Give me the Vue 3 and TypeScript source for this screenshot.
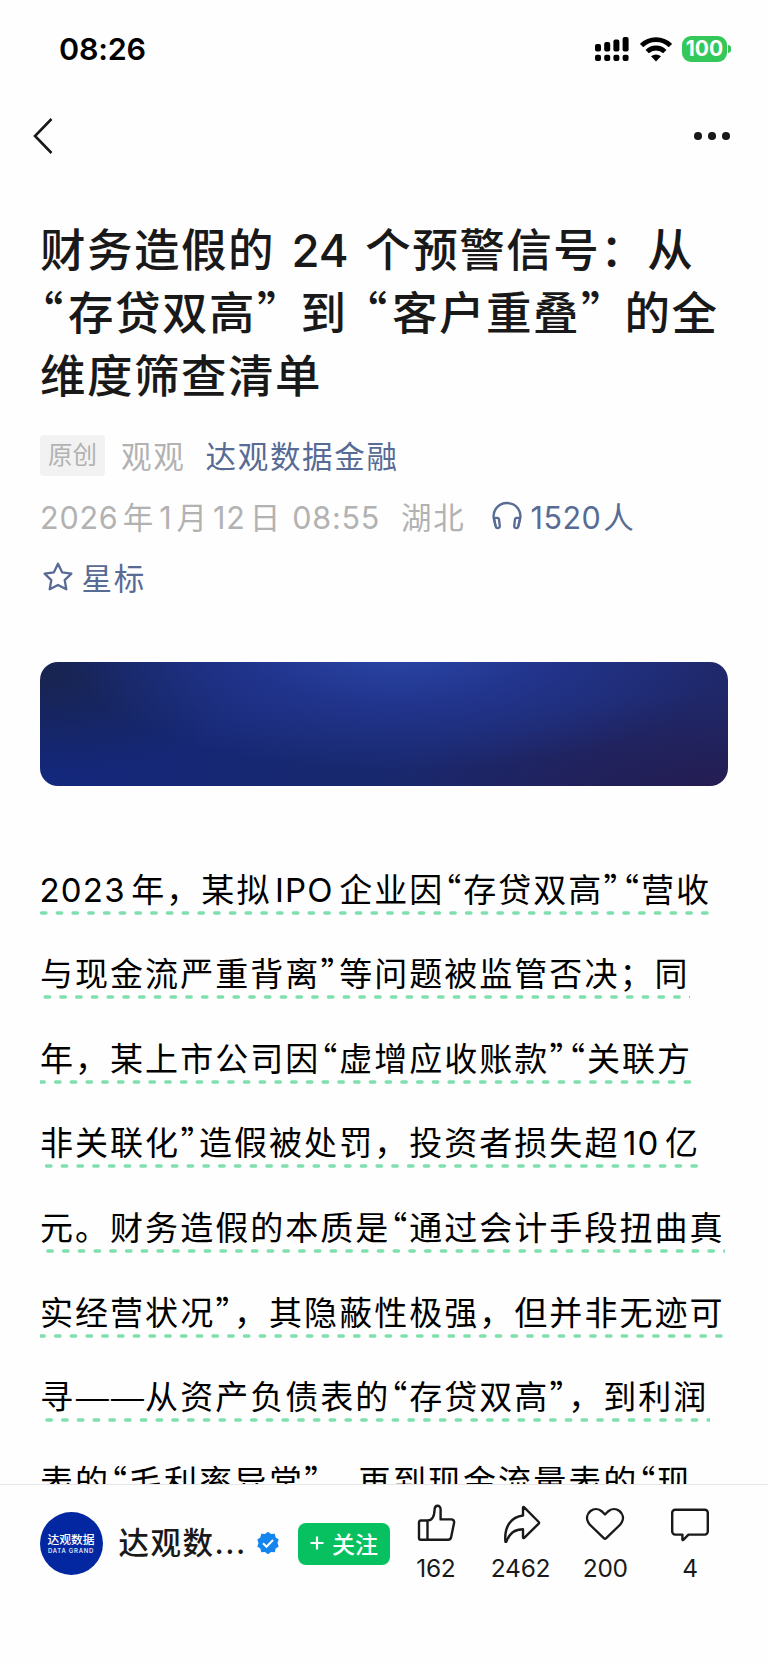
<script setup lang="ts">
type RunKind = 'han' | 'num' | 'quote open' | 'quote' | 'gap' | 'dash'
interface Run { kind: RunKind; text: string }
interface BodyLine { text: string; end: number; first: number }

/** Splits mixed text into runs so that each script gets its own spacing. */
function runs(text: string): Run[] {
  const parts = text.match(/[“”—]|[A-Za-z0-9:]+| +|[^“”—A-Za-z0-9: ]+/g) ?? []
  return parts.map((part) => {
    const kind: RunKind = part === '“' ? 'quote open'
      : part === '”' ? 'quote'
        : part === '—' ? 'dash'
          : /^ +$/.test(part) ? 'gap'
            : /^[A-Za-z0-9:]/.test(part) ? 'num' : 'han'
    return { kind, text: part }
  })
}

const titleLines = ['财务造假的 24 个预警信号：从', '“存贷双高” 到 “客户重叠” 的全', '维度筛查清单']

const bodyLines: BodyLine[] = [
  { text: '2023年，某拟IPO企业因“存贷双高”“营收', end: 669, first: 0 },
  { text: '与现金流严重背离”等问题被监管否决；同', end: 650, first: 3.6 },
  { text: '年，某上市公司因“虚增应收账款”“关联方', end: 652, first: -1.7 },
  { text: '非关联化”造假被处罚，投资者损失超10亿', end: 659, first: 5 },
  { text: '元。财务造假的本质是“通过会计手段扭曲真', end: 685, first: 6.3 },
  { text: '实经营状况”，其隐蔽性极强，但并非无迹可', end: 684, first: -1.7 },
  { text: '寻——从资产负债表的“存贷双高”，到利润', end: 670, first: 5.4 },
  { text: '表的“毛利率异常”，再到现金流量表的“现', end: 660, first: 2 },
]

const counts = { like: '162', share: '2462', love: '200', comment: '4' }
</script>

<template>
  <div class="screen">
    <header class="status">
      <span class="clock">08:26</span>
      <svg class="signal" width="34" height="26" viewBox="0 0 34 26">
        <rect x="0" y="8" width="6" height="7.5" rx="2" />
        <rect x="9.2" y="6" width="6" height="9.5" rx="2" />
        <rect x="18.4" y="3.5" width="6" height="12" rx="2" />
        <rect x="27.6" y="1" width="6" height="14.5" rx="2" />
        <rect v-for="i in 4" :key="i" :x="(i - 1) * 9.2" y="18.7" width="6" height="6.3" rx="2" />
      </svg>
      <svg class="wifi" width="32" height="25" viewBox="0 0 32 25">
        <path d="M1.600 8.600a20.500 20.500 0 0 1 28.800 0" />
        <path d="M7.200 14.600a12.500 12.500 0 0 1 17.600 0" />
        <path class="solid" d="M11 19.300q5-3.800 10 0L16 24.500z" />
      </svg>
      <span class="battery">100</span>
      <i class="nub"></i>
    </header>

    <nav class="nav">
      <svg width="20" height="38" viewBox="0 0 20 38"><path d="M18.500 2L2 19l16.500 17" /></svg>
      <div class="more"><i v-for="i in 3" :key="i"></i></div>
    </nav>

    <main class="article">
      <h1>
        <span v-for="line in titleLines" :key="line" class="line"><span v-for="(r, i) in runs(line)" :key="i" :class="r.kind">{{ r.text }}</span></span>
      </h1>

      <div class="meta">
        <span class="tag">原创</span>
        <span class="author">观观</span>
        <span class="account">达观数据金融</span>
      </div>
      <div class="meta">
        <span class="date"><span v-for="(r, i) in runs('2026年1月12日 08:55')" :key="i" :class="r.kind">{{ r.text }}</span></span>
        <span class="place">湖北</span>
        <svg class="phones" width="30" height="30" viewBox="0 0 30 30">
          <path d="M3.600 25L2.200 19.500C-.5 10 6 2 15 2s15.500 8 12.800 17.500L26.400 25" />
          <path d="M2 16.800h3.200a1.800 1.800 0 0 1 1.800 1.600l.8 6.600a2.100 2.100 0 0 1-4.100.6z" />
          <path d="M28 16.800h-3.200a1.800 1.800 0 0 0-1.800 1.600l-.8 6.600a2.100 2.100 0 0 0 4.100.6z" />
        </svg>
        <span class="listen"><span class="num">1520</span>人</span>
      </div>
      <div class="meta">
        <svg class="star" width="32" height="32" viewBox="0 0 32 32">
          <path d="M16 2.800l4.100 8.500 9.300 1.300-6.700 6.500 1.600 9.200L16 23.900l-8.300 4.400 1.600-9.200-6.700-6.500 9.300-1.300z" />
        </svg>
        <span class="mark">星标</span>
      </div>

      <div class="banner"></div>

      <div class="body">
        <div v-for="line in bodyLines" :key="line.text" class="row">
          <p class="line"><span v-for="(r, i) in runs(line.text)" :key="i" :class="r.kind">{{ r.text }}</span></p>
          <svg class="dashes" :width="line.end" height="4">
            <line :x1="line.first + 1.5" y1="2" x2="720" y2="2" />
          </svg>
        </div>
      </div>
    </main>

    <footer class="bar">
      <div class="avatar"><b>达观数据</b><small>DATA GRAND</small></div>
      <span class="name">达观数<span class="dots">...</span></span>
      <svg class="badge" width="24" height="24" viewBox="0 0 24 24">
        <path class="seal" d="M12 .7l3 2.200 3.700-.1 1 3.600 3 2.100L21.500 12l1.200 3.500-3 2.100-1 3.600-3.700-.1-3 2.200-3-2.200-3.700.1-1-3.600-3-2.100L2.500 12 1.300 8.500l3-2.100 1-3.600 3.700.1z" />
        <path class="tick" d="M7 12.200l3.500 3.500 6.500-6.700" />
      </svg>
      <button class="follow"><svg width="14" height="14" viewBox="0 0 14 14"><path d="M7 .5v13M.5 7h13" /></svg>关注</button>
      <div class="actions">
        <div class="action">
          <svg width="40" height="40" viewBox="0 0 40 40">
            <path d="M11.500 17.500H4.700A1.700 1.700 0 0 0 3 19.200V35a1.700 1.700 0 0 0 1.700 1.700h27.500a3 3 0 0 0 2.900-2.500l3-14.500a2.800 2.800 0 0 0-2.800-3.300H24.600V6.500c0-5-5.800-5-6 0-.2 6-2.200 11-7.100 11zM11.500 17.500v19.200" />
          </svg>
          <span>{{ counts.like }}</span>
        </div>
        <div class="action">
          <svg width="40" height="40" viewBox="0 0 40 40">
            <path d="M22 12.500V4.600q.2-1 1.200-.2L37.700 19q.7.800 0 1.600L23.200 34.800q-1 .8-1.200-.2v-8.400c-8 0-13.500 3.500-16.500 12.100-.4 1-1 1-1.100 0C3 22.500 11 13.800 22 12.500z" />
          </svg>
          <span>{{ counts.share }}</span>
        </div>
        <div class="action">
          <svg width="40" height="40" viewBox="0 0 40 40">
            <path d="M20 11.500l-3-3C9.500 1.700-1.500 10.500 3.200 19.300c.8 1.500 1.500 2.200 2.500 3.200L18.800 35.200q1.200 1.100 2.400 0L34.300 22.500c1-1 1.700-1.700 2.500-3.200C41.500 10.500 30.500 1.700 23 8.500z" />
          </svg>
          <span>{{ counts.love }}</span>
        </div>
        <div class="action">
          <svg width="40" height="40" viewBox="0 0 40 40">
            <path d="M5.200 6.800h29.600a3 3 0 0 1 3 3v18.800a3 3 0 0 1-3 3H18.500l-5.200 5.200q-.9.700-.9-.4v-4.800H5.200a3 3 0 0 1-3-3V9.800a3 3 0 0 1 3-3z" />
          </svg>
          <span>{{ counts.comment }}</span>
        </div>
      </div>
    </footer>
  </div>
</template>

<style>
body {
  margin: 0;
  background: #fff;
}
</style>

<style scoped>
.screen {
  width: 768px;
  height: 1663px;
  overflow: hidden;
  display: flex;
  flex-direction: column;
  background: #fefefe;
  font-family: Inter, "Noto Sans CJK SC", sans-serif;
  color: #000;
}

.screen * {
  box-sizing: border-box;
}

svg {
  display: block;
  flex: none;
}

.status {
  height: 98px;
  flex: none;
  display: flex;
  align-items: center;
  padding: 0 0 0 59px;
}

.clock {
  width: 536px;
  padding-bottom: 2px;
  font-size: 30.5px;
  font-weight: 600;
  letter-spacing: -0.2px;
}

.wifi {
  margin-left: 11px;
}

.wifi path {
  fill: none;
  stroke: #000;
  stroke-width: 4.8;
}

.wifi .solid {
  fill: #000;
  stroke: none;
}

.battery {
  width: 45px;
  height: 26px;
  margin-left: 10px;
  border-radius: 9px;
  background: #34c759;
  color: #fff;
  font-size: 21px;
  font-weight: 700;
  line-height: 26px;
  text-align: center;
}

.nub {
  width: 3px;
  height: 8px;
  margin-left: 1px;
  border-radius: 0 4px 4px 0;
  background: #34c759;
}

.nav {
  height: 76px;
  flex: none;
  display: flex;
  align-items: center;
  justify-content: space-between;
  padding: 0 38px 0 33px;
}

.nav path {
  fill: none;
  stroke: #191919;
  stroke-width: 2.6;
}

.more {
  display: flex;
  gap: 6.5px;
}

.more i {
  width: 7.6px;
  height: 7.6px;
  border-radius: 50%;
  background: #191919;
}

.article {
  height: 1310px;
  flex: none;
  overflow: hidden;
  padding: 42px 40px 0;
}

.line {
  display: block;
  white-space: pre;
}

.quote {
  display: inline-block;
  font-family: "Noto Sans CJK SC", sans-serif;
  font-feature-settings: "palt";
  line-height: 1;
  text-align: center;
}

.quote.open {
  text-align: left;
}

.dash {
  display: inline-block;
  width: 35.04px;
  font-family: "Noto Sans CJK SC", sans-serif;
  line-height: 1;
  letter-spacing: 0;
  text-align: center;
  transform: scaleX(1.25);
}

.han {
  font-family: "Noto Sans CJK SC", sans-serif;
}

h1 {
  height: 189px;
  margin: 0 0 19px;
  font-size: 45.5px;
  font-weight: 500;
  line-height: 63px;
  color: #191919;
  letter-spacing: 1.5px;
}

h1 .line {
  height: 63px;
}

h1 .num {
  letter-spacing: 0;
}

h1 .quote {
  width: 28px;
  letter-spacing: 0;
}

h1 .quote:not(.open) {
  padding-right: 2px;
}

h1 .gap {
  display: inline-block;
  width: 16.5px;
  letter-spacing: 0;
}

.meta {
  height: 61px;
  display: flex;
  align-items: center;
  font-size: 30.5px;
  letter-spacing: 1.7px;
  color: #b2b2b2;
  white-space: pre;
}

.tag {
  width: 65px;
  height: 41px;
  margin: 2px 16px 0 0;
  border-radius: 4px;
  background: #f2f2f2;
  font-size: 24.5px;
  line-height: 41px;
  letter-spacing: 0;
  text-align: center;
}

.author {
  width: 84.5px;
}

.account,
.listen,
.mark {
  color: #576b95;
}

.date {
  width: 361px;
}

.date .num {
  margin: 0 4.2px;
  letter-spacing: 0.8px;
}

.date .num:first-child {
  margin-left: 0;
}

.date .gap + .num {
  margin: 0;
}

.place {
  width: 91px;
}

.listen {
  margin-left: 8.5px;
}

.listen .num {
  margin-right: 2px;
  letter-spacing: 0.5px;
}

.phones path,
.star path {
  fill: none;
  stroke: #576b95;
  stroke-width: 2.3;
  stroke-linejoin: round;
}

.star {
  margin: 0 7.5px 0 2px;
}

.banner {
  width: 688px;
  height: 124px;
  margin-top: 55px;
  border-radius: 18px;
  background:
    radial-gradient(ellipse 330px 120px at 52% -8%, #2a46a6 0%, rgba(36, 56, 150, 0.75) 45%, rgba(32, 48, 130, 0) 100%),
    radial-gradient(ellipse 220px 100px at 0% 10%, #18244f 0%, rgba(24, 36, 80, 0) 100%),
    radial-gradient(ellipse 340px 100px at 100% 105%, #241c50 0%, rgba(34, 30, 82, 0) 100%),
    linear-gradient(90deg, #13277c 0%, #18286e 45%, #20286a 100%);
}

.body {
  margin-top: 59.5px;
}

.row {
  height: 84.67px;
}

.body .line {
  height: 65px;
  margin: 0;
  font-size: 33px;
  line-height: 84.67px;
  letter-spacing: 2.04px;
}

.body .quote {
  width: 18.8px;
  letter-spacing: 0;
}

.body .quote:not(.open) {
  padding-right: 1px;
}

.body .num {
  margin: 0 5.5px 0 3.5px;
  letter-spacing: 1.2px;
}

.body .num:first-child {
  margin-left: -0.5px;
}

.dashes line {
  stroke: #7fe0ae;
  stroke-width: 3.3;
  stroke-linecap: round;
  stroke-dasharray: 4.5 11.24;
}

.bar {
  height: 179px;
  flex: none;
  display: flex;
  border-top: 1px solid #e6e6e6;
  background: #fefefe;
  padding: 27px 0 0 39.5px;
  align-items: flex-start;
}

.avatar {
  width: 63px;
  height: 63px;
  border-radius: 50%;
  background: #0227a0;
  color: #fff;
  display: flex;
  flex-direction: column;
  align-items: center;
  padding-top: 20px;
  white-space: nowrap;
}

.avatar b {
  font-size: 11.8px;
  font-weight: 500;
  line-height: 16px;
}

.avatar small {
  font-size: 6px;
  line-height: 6px;
  letter-spacing: 0.75px;
  font-weight: 500;
}

.name {
  width: 136px;
  margin-left: 16px;
  font-size: 30.5px;
  font-weight: 500;
  letter-spacing: 1.5px;
  line-height: 61px;
  color: #191919;
  white-space: nowrap;
}

.badge {
  margin: 19px 18.5px 0 1px;
}

.seal {
  fill: #1485ee;
}

.tick {
  fill: none;
  stroke: #fff;
  stroke-width: 2;
}

.follow {
  width: 92px;
  height: 42px;
  margin: 11px 0 0;
  padding: 0 0 3px;
  border: 0;
  border-radius: 8px;
  background: #07c160;
  color: #fff;
  font: 500 23px Inter, "Noto Sans CJK SC", sans-serif;
  display: flex;
  align-items: center;
  justify-content: center;
  gap: 8px;
}

.follow path {
  stroke: #fff;
  stroke-width: 2.2;
}

.actions {
  display: flex;
  margin-left: 3.5px;
}

.action {
  width: 84.7px;
  display: flex;
  flex-direction: column;
  align-items: center;
  font-size: 24.5px;
  line-height: 30px;
  letter-spacing: -0.3px;
  color: #191919;
}

.action svg {
  margin: -9px 0 10px;
}

.action path {
  fill: none;
  stroke: #191919;
  stroke-width: 2.4;
  stroke-linejoin: round;
}
</style>
